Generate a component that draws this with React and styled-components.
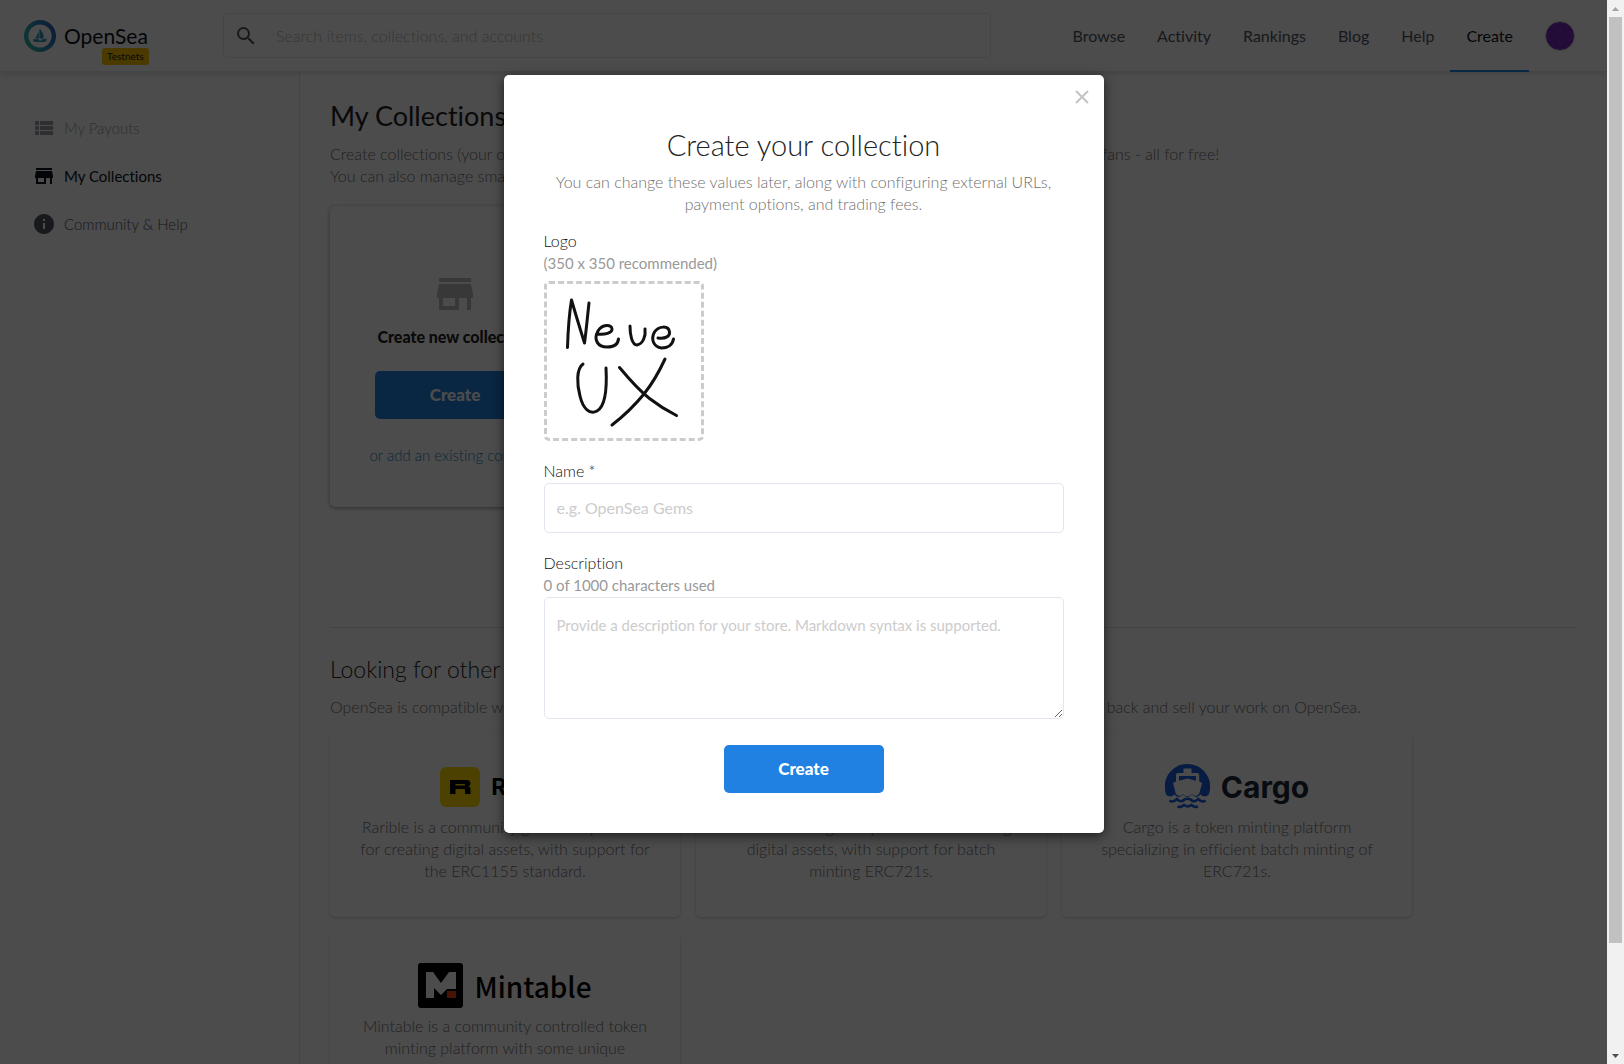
import React, { useState } from "react";
import styled, { createGlobalStyle, css } from "styled-components";
import { MdInfo, MdSearch, MdStore, MdViewList } from "react-icons/md";

const blue = "#2081e2";

export default function App() {
  return (
    <Shell>
      <GlobalStyle />
      <Page>
        <TopBar />
        <Body>
          <SideMenu />
          <Collections />
        </Body>
        <Backdrop>
          <CollectionModal />
        </Backdrop>
      </Page>
      <ScrollBar />
    </Shell>
  );
}

function TopBar() {
  return (
    <Header>
      <Brand href="#">
        <OpenSeaLogo />
        <BrandName>OpenSea</BrandName>
        <Badge>Testnets</Badge>
      </Brand>
      <SearchBox>
        <MdSearch size={24} />
        <SearchInput
          aria-label="Search"
          placeholder="Search items, collections, and accounts"
        />
      </SearchBox>
      <Nav>
        {["Browse", "Activity", "Rankings", "Blog", "Help", "Create"].map(
          (item) => (
            <NavLink key={item} href="#" $active={item === "Create"}>
              {item}
            </NavLink>
          )
        )}
        <Avatar aria-label="Account" />
      </Nav>
    </Header>
  );
}

function SideMenu() {
  return (
    <Aside>
      <MenuLink href="#" $color="#9d9fa3">
        <MdViewList size={24} />
        My Payouts
      </MenuLink>
      <MenuLink href="#" $color="#0b1320" $bold>
        <MdStore size={24} />
        My Collections
      </MenuLink>
      <MenuLink href="#" $color="#4e5663">
        <MdInfo size={24} />
        Community &amp; Help
      </MenuLink>
    </Aside>
  );
}

const platforms = [
  {
    name: "Rarible",
    Logo: RaribleLogo,
    text: "Rarible is a community governed platform\nfor creating digital assets, with support for\nthe ERC1155 standard.",
  },
  {
    name: "Mintbase",
    text: "Mintbase is a global platform for creating\ndigital assets, with support for batch\nminting ERC721s.",
  },
  {
    name: "Cargo",
    Logo: CargoLogo,
    text: "Cargo is a token minting platform\nspecializing in efficient batch minting of\nERC721s.",
  },
  {
    name: "Mintable",
    Logo: MintableLogo,
    text: "Mintable is a community controlled token\nminting platform with some unique\nfeatures.",
  },
];

function Collections() {
  return (
    <Main>
      <PageTitle>My Collections</PageTitle>
      <Copy>
        Create collections (your own stores) of unique digital items and art
        pieces, and share them with your friends and fans - all for free!
      </Copy>
      <Copy>You can also manage smart contracts for your items.</Copy>
      <NewCard>
        <MdStore size={48} color="#bcbcbc" />
        <CardTitle>Create new collection</CardTitle>
        <PrimaryButton>Create</PrimaryButton>
        <AddLink href="#">or add an existing contract</AddLink>
      </NewCard>
      <Divider />
      <SectionTitle>Looking for other ways to mint?</SectionTitle>
      <Copy>
        OpenSea is compatible with all of the platforms listed below. Create new
        items with any one of them, then come back and sell your work on
        OpenSea.
      </Copy>
      <Platforms>
        {platforms.map(({ name, Logo, text }) => (
          <Platform key={name}>
            <LogoRow>
              {Logo && <Logo />}
              <LogoName $name={name}>{name}</LogoName>
            </LogoRow>
            <PlatformText>{text}</PlatformText>
          </Platform>
        ))}
      </Platforms>
    </Main>
  );
}

function CollectionModal() {
  const [name, setName] = useState("");
  const [description, setDescription] = useState("");

  return (
    <Modal role="dialog" aria-labelledby="modal-title">
      <CloseButton aria-label="Close">
        <svg width="14" height="14" viewBox="0 0 14 14">
          <path d="M1 1l12 12M13 1L1 13" stroke="#c4c4c4" strokeWidth="2" />
        </svg>
      </CloseButton>
      <ModalTitle id="modal-title">Create your collection</ModalTitle>
      <ModalCopy>
        You can change these values later, along with configuring external URLs,
        payment options, and trading fees.
      </ModalCopy>
      <Field>
        <Label as="div">Logo</Label>
        <Hint>(350 x 350 recommended)</Hint>
        <LogoDrop aria-label="Logo">
          <NeueDrawing />
        </LogoDrop>
      </Field>
      <Field>
        <Label htmlFor="name">Name *</Label>
        <TextInput
          id="name"
          value={name}
          placeholder="e.g. OpenSea Gems"
          onChange={(e) => setName(e.target.value)}
        />
      </Field>
      <Field>
        <Label htmlFor="description">Description</Label>
        <Hint>{description.length} of 1000 characters used</Hint>
        <TextArea
          id="description"
          value={description}
          maxLength={1000}
          placeholder="Provide a description for your store. Markdown syntax is supported."
          onChange={(e) => setDescription(e.target.value)}
        />
      </Field>
      <PrimaryButton>Create</PrimaryButton>
    </Modal>
  );
}

function ScrollBar() {
  return (
    <Track>
      <Arrow width="17" height="17" viewBox="0 0 17 17" fill="#a3a3a3">
        <path d="M5 11h7L8.500 7z" />
      </Arrow>
      <Thumb />
      <Arrow width="17" height="17" viewBox="0 0 17 17" fill="#505050">
        <path d="M5 7h7L8.500 11z" />
      </Arrow>
    </Track>
  );
}

function OpenSeaLogo() {
  return (
    <svg width="32" height="32" viewBox="0 0 32 32">
      <defs>
        <linearGradient id="ring" x1="0" y1="0.7" x2="1" y2="0.3">
          <stop offset="0" stopColor="#2fb3a5" />
          <stop offset="0.5" stopColor="#2c92c0" />
          <stop offset="1" stopColor="#2367bd" />
        </linearGradient>
      </defs>
      <circle cx="16" cy="16" r="13.800" fill="none" stroke="url(#ring)" strokeWidth="4.400" />
      <g fill="#2c9cbb">
        <path d="M14.800 10.500v8h-4c1.800-2 3.200-4.600 4-8z" />
        <path d="M15.500 9h1v1.200c2.600 1.800 3.800 5.200 3 8.300h-4z" />
        <path d="M9 19.200h6v1.200h2.400v-1.200h2.600l2.600-.8c.4 2-.9 3.600-3 3.600h-7.600C10 22 9 21 9 19.200z" />
      </g>
    </svg>
  );
}

function RaribleLogo() {
  return (
    <svg width="40" height="40" viewBox="0 0 40 40">
      <rect width="40" height="40" rx="6" fill="#feda03" />
      <path
        fill="#000"
        fillRule="evenodd"
        d="M10 13h16.500c2.700 0 4 1.200 4 3.300 0 1.600-.8 2.600-2.200 3 1.600.4 2.200 1.200 2.200 2.700v5h-5.500v-3.800c0-.8-.4-1.200-1.200-1.200H15.500v5H10zm5.500 4v1.600h8.700c.6 0 .9-.3.900-.8s-.3-.8-.9-.8z"
      />
    </svg>
  );
}

function CargoLogo() {
  return (
    <svg width="45" height="45" viewBox="0 0 45 45">
      <path
        fill="#1d5fe0"
        d="M22.500 0A22.500 22.500 0 0 1 43.500 31c-3 2.300-5.800 1.700-8-.8-2.800 3.400-6 3.400-8.700.2-2.800 3.200-6 3.200-8.700 0-2.700 3.200-6 3.200-8.700-.2-2.300 2.500-5 3.100-8 .8A22.500 22.500 0 0 1 22.500 0z"
      />
      <path
        fill="#fff"
        d="M18.500 4.500h8V9h5.500c1.500 0 2.200.8 2.200 2.200v6.300l3 1.500-3 10.500c-2.500 3-5 3-7.400.4-2.800 3-6 3-8.700 0-2.300 2.600-5 2.600-7.300-.4L8 19l3-1.500v-6.300C11 9.800 11.700 9 13.200 9h5.300z"
      />
      <path fill="#1d5fe0" d="M14 12h17v4.800L22.500 14.500 14 16.800z" />
      <g fill="none" stroke="#1d5fe0" strokeWidth="2.600">
        <path d="M4.500 36.500c2.500 1.800 5 1 7.500-1.500 2.500 3 5 3 7.500.5l3-1 3 1c2.500 2.500 5 2.500 7.500-.5 2.500 2.500 5 3.300 7.500 1.500" />
        <path d="M12.500 42.500c2.500 1 4.500.3 6.500-1.500 2.500 1.800 5 1.800 7.500 0 2 1.800 4 2.500 6.500 1.500" />
      </g>
    </svg>
  );
}

function MintableLogo() {
  return (
    <svg width="45" height="45" viewBox="0 0 45 45">
      <rect width="45" height="45" rx="3" fill="#000" />
      <path fill="#fff" d="M8 9h7l8 11 8-11h7v17h-9l-6 6-7-7v10H8z" />
      <path fill="#e8430e" d="M29 28h9v7h-9z" />
    </svg>
  );
}

function NeueDrawing() {
  return (
    <svg
      width="154"
      height="154"
      viewBox="547 284 154 154"
      fill="none"
      stroke="#111"
      strokeWidth="3"
      strokeLinecap="round"
      strokeLinejoin="round"
    >
      <path d="M567.500 347.500C568 332 569 315 571.500 300c4 14 9 30 13 43 2-15 3-27 4.500-40" />
      <path d="M597 334c8 1 15-1 15-5 0-5-10-5-14 2-5 9 0 16 9 16 7 0 11-3 11.500-8" />
      <path d="M630 326c0 9 2 19 7 19 6-1 9-9 8-16" />
      <path d="M658 338c8 1 12-2 11.500-6-1-7-11-6-15 0-4 7-1 15 7 16 6 0 11-3 12-9" />
      <path d="M583 364c-7 5-6 21-3 32 3 13 10 19 17 15 9-5 10-24 9-43" />
      <path d="M619.500 367.500c10 12 21 24 30 31 9 7 17 12 27 17" />
      <path d="M665 359c-6 13-13 25-21 35-9 11-19 21-32 31" />
    </svg>
  );
}

const GlobalStyle = createGlobalStyle`
  * {
    box-sizing: border-box;
  }
  body {
    margin: 0;
    overflow: hidden;
    background: #fff;
    color: #222;
    font-family: Lato, "Open Sans", sans-serif;
    font-size: 16px;
    font-variant-ligatures: none;
    font-weight: 300;
    line-height: 22px;
  }
  a {
    color: inherit;
    text-decoration: none;
  }
  h1, h2, p {
    margin: 0;
    font-weight: 300;
  }
  button, input, textarea {
    font: inherit;
    font-variant-ligatures: none;
  }
`;

const Shell = styled.div`
  display: grid;
  grid-template-columns: minmax(0, 1fr) 17px;
  height: 100vh;
`;

const Page = styled.div`
  position: relative;
  display: flex;
  flex-direction: column;
  overflow: hidden;
`;

const Header = styled.header`
  display: flex;
  flex: none;
  align-items: center;
  height: 72px;
  padding: 0 32px 0 24px;
  border-bottom: 1px solid #e5e8eb;
  box-shadow: 0 1px 6px rgba(0, 0, 0, 0.15);
  z-index: 1;
`;

const Brand = styled.a`
  position: relative;
  display: flex;
  align-items: center;
  gap: 8px;
  width: 199px;
`;

const BrandName = styled.span`
  color: #0b1320;
  font-size: 21px;
  font-weight: 400;
`;

const Badge = styled.span`
  position: absolute;
  top: 28px;
  left: 78px;
  padding: 0 5px;
  border-radius: 3px;
  background: #f8c100;
  color: #222;
  font-size: 10px;
  font-weight: 400;
  line-height: 17px;
`;

const SearchBox = styled.div`
  display: flex;
  align-items: center;
  gap: 16px;
  width: 768px;
  height: 45px;
  padding: 0 10px;
  border: 1px solid #e5e8eb;
  border-radius: 5px;
  color: #4e5663;
`;

const SearchInput = styled.input`
  flex: 1;
  border: 0;
  outline: 0;
  background: none;

  &::placeholder {
    color: #b5b5b5;
  }
`;

const Nav = styled.nav`
  display: flex;
  align-items: center;
  height: 72px;
  margin-left: auto;
`;

const NavLink = styled.a`
  padding: 0 16px;
  color: #4e5663;
  font-weight: 400;
  line-height: 72px;

  ${({ $active }) =>
    $active &&
    css`
      box-shadow: inset 0 -2px ${blue};
      color: #0b1320;
    `}
`;

const Avatar = styled.button`
  width: 30px;
  height: 30px;
  margin-left: 16px;
  border: 1px solid #d8d8d8;
  border-radius: 50%;
  background: #7a2bc0;
`;

const Body = styled.div`
  display: flex;
  flex: 1;
  min-height: 0;
`;

const Aside = styled.aside`
  flex: none;
  width: 300px;
  padding: 32px 0 0 32px;
  border-right: 1px solid #e5e8eb;
  background: #fdfdfd;
`;

const MenuLink = styled.a`
  display: flex;
  align-items: center;
  gap: 8px;
  height: 48px;
  color: ${({ $color }) => $color};
  font-size: 15px;
  font-weight: ${({ $bold }) => ($bold ? 400 : 300)};
`;

const Main = styled.main`
  flex: 1;
  min-width: 0;
  padding: 27px 30px 0;
`;

const PageTitle = styled.h1`
  margin-bottom: 10px;
  font-size: 27px;
  font-weight: 400;
  line-height: 34px;
`;

const Copy = styled.p`
  color: #707070;
  white-space: nowrap;
`;

const panel = css`
  border-radius: 5px;
  background: #fff;
  box-shadow: 0 1px 3px rgba(0, 0, 0, 0.2);
`;

const NewCard = styled.section`
  ${panel}
  display: flex;
  flex-direction: column;
  align-items: center;
  width: 250px;
  height: 301px;
  margin-top: 19px;
  padding-top: 64px;
  box-shadow: 0 1px 4px rgba(0, 0, 0, 0.4);
`;

const CardTitle = styled.p`
  margin: 8px 0 23px;
  font-weight: 900;
`;

const PrimaryButton = styled.button`
  width: 160px;
  height: 48px;
  border: 0;
  border-radius: 5px;
  background: ${blue};
  color: #fff;
  font-size: 17px;
  font-weight: 900;
`;

const AddLink = styled.a`
  margin-top: 25px;
  color: #1889c4;
  font-size: 15px;
`;

const Divider = styled.hr`
  margin: 120px 0 27px;
  border: 0;
  border-top: 1px solid #e0e0e0;
`;

const SectionTitle = styled.h2`
  margin-bottom: 13px;
  font-size: 23px;
  line-height: 28px;
`;

const Platforms = styled.div`
  display: grid;
  grid-template-columns: repeat(auto-fill, 350px);
  gap: 16px;
  max-width: 1100px;
  margin-top: 16px;
`;

const Platform = styled.section`
  ${panel}
  height: 183px;
  padding-top: 30px;
`;

const LogoRow = styled.div`
  display: flex;
  align-items: center;
  justify-content: center;
  gap: 11px;
  height: 45px;
`;

const wordmarks = {
  Rarible: css`
    font-size: 23px;
    font-weight: 700;
  `,
  Cargo: css`
    color: #1b2a38;
    font-size: 30px;
    font-weight: 700;
  `,
  Mintable: css`
    font-family: "Noto Sans CJK JP", sans-serif;
    font-size: 28px;
    font-weight: 500;
  `,
};

const LogoName = styled.span`
  color: #000;
  font-family: Inter, sans-serif;
  ${({ $name }) => wordmarks[$name]}
`;

const PlatformText = styled.p`
  margin-top: 7px;
  color: #707070;
  text-align: center;
  white-space: pre-line;
`;

const Backdrop = styled.div`
  position: absolute;
  inset: 0;
  z-index: 2;
  padding-top: 75px;
  background: rgba(0, 0, 0, 0.7);
`;

const Modal = styled.div`
  position: relative;
  display: flex;
  flex-direction: column;
  align-items: center;
  width: 600px;
  margin: 0 auto;
  padding: 53px 40px 40px;
  border-radius: 5px;
  background: #fff;
  box-shadow: 0 3px 12px rgba(0, 0, 0, 0.6);
`;

const CloseButton = styled.button`
  position: absolute;
  top: 15px;
  right: 15px;
  display: flex;
  padding: 0;
  border: 0;
  background: none;
`;

const ModalTitle = styled.h2`
  font-size: 29px;
  line-height: 34px;
`;

const ModalCopy = styled.p`
  margin: 9px 0 15px;
  color: #707070;
  text-align: center;
`;

const Field = styled.div`
  display: flex;
  flex-direction: column;
  align-self: stretch;
  margin-bottom: 19px;
`;

const Label = styled.label`
  color: #111;
`;

const Hint = styled.span`
  color: #999;
  font-size: 15px;
  font-weight: 400;
`;

const LogoDrop = styled.button`
  width: 160px;
  height: 160px;
  margin-top: 7px;
  padding: 0;
  border: 3px dashed #ccc;
  border-radius: 5px;
  background: #fff;
`;

const control = css`
  margin-top: 1px;
  border: 1px solid #e2e6ef;
  border-radius: 5px;
  outline: 0;
  background: #fff;

  &::placeholder {
    color: #ccc;
    font-weight: 400;
  }
`;

const TextInput = styled.input`
  ${control}
  height: 50px;
  padding: 0 12px 2px;
`;

const TextArea = styled.textarea`
  ${control}
  height: 122px;
  margin-bottom: 7px;
  padding: 16px 12px;
  font-size: 15px;
  resize: vertical;
`;

const Track = styled.div`
  display: flex;
  flex-direction: column;
  align-items: center;
  background: #f1f1f1;
`;

const Arrow = styled.svg`
  flex: none;
`;

const Thumb = styled.div`
  width: 13px;
  height: 87%;
  margin-bottom: auto;
  background: #c1c1c1;
`;
